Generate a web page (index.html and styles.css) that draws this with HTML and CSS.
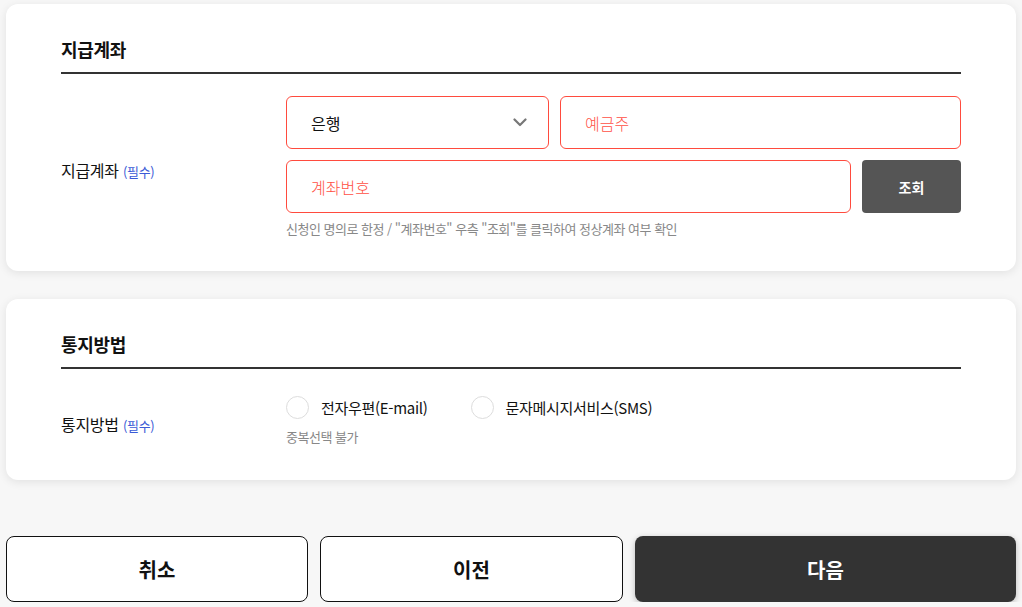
FILE: index.html
```html
<!DOCTYPE html>
<html lang="ko">
<head>
<meta charset="utf-8">
<title>지급계좌</title>
<link rel="stylesheet" href="styles.css">
</head>
<body>
<div class="page">
  <section class="card">
    <h2 class="card-title">지급계좌</h2>
    <div class="form-row">
      <div class="label">지급계좌 <span class="req">(필수)</span></div>
      <div class="fields">
        <div class="line">
          <div class="select">
            <span>은행</span>
            <svg class="chev" width="14" height="9" viewBox="0 0 14 9"><path d="M1.5 1.5 L7 7 L12.5 1.5" fill="none" stroke="#777" stroke-width="2.2" stroke-linecap="round" stroke-linejoin="round"/></svg>
          </div>
          <div class="input grow"><span class="ph">예금주</span></div>
        </div>
        <div class="line">
          <div class="input grow"><span class="ph">계좌번호</span></div>
          <button class="btn-check">조회</button>
        </div>
        <p class="help">신청인 명의로 한정 / "계좌번호" 우측 "조회"를 클릭하여 정상계좌 여부 확인</p>
      </div>
    </div>
  </section>

  <section class="card">
    <h2 class="card-title">통지방법</h2>
    <div class="form-row">
      <div class="label">통지방법 <span class="req">(필수)</span></div>
      <div class="fields">
        <div class="radios">
          <label class="radio"><span class="circle"></span>전자우편(E-mail)</label>
          <label class="radio"><span class="circle"></span>문자메시지서비스(SMS)</label>
        </div>
        <p class="help">중복선택 불가</p>
      </div>
    </div>
  </section>

  <div class="actions">
    <button class="btn-line">취소</button>
    <button class="btn-line">이전</button>
    <button class="btn-dark">다음</button>
  </div>
</div>
</body>
</html>
```

FILE: styles.css
```css
* { box-sizing: border-box; }
html, body {
  margin: 0;
  padding: 0;
  background: #f7f7f7;
  font-family: "Noto Sans CJK KR", "Noto Sans", sans-serif;
  color: #111;
}
.page {
  padding: 4px 6px 0 6px;
  display: flex;
  flex-direction: column;
}
.card {
  background: #fff;
  border-radius: 12px;
  box-shadow: 0 2px 10px rgba(0,0,0,0.09);
  padding: 32px 55px 33px 55px;
  margin-bottom: 28px;
}
.card + .card { padding-bottom: 34px; margin-bottom: 56px; }
.card-title {
  margin: 0;
  font-size: 18px;
  font-weight: 700;
  line-height: 26px;
  padding-bottom: 10px;
  border-bottom: 2px solid #333;
  letter-spacing: -0.3px;
}
.form-row {
  display: flex;
  align-items: center;
  padding-top: 22px;
}
.card + .card .form-row { padding-top: 27px; }
.label {
  width: 225px;
  flex: none;
  font-size: 16px;
  padding-top: 6px;
  letter-spacing: -0.3px;
}
.req {
  color: #3b5bd6;
  font-size: 13px;
}
.fields {
  flex: 1;
  display: flex;
  flex-direction: column;
  gap: 11px;
}
.line {
  display: flex;
  gap: 11px;
}
.select, .input {
  height: 53px;
  border: 1px solid #ff4b3e;
  border-radius: 6px;
  display: flex;
  align-items: center;
  padding: 0 24px;
  font-size: 16px;
}
.select {
  width: 263px;
  flex: none;
  justify-content: space-between;
  padding-right: 21px;
}
.grow { flex: 1; }
.ph { color: #ff5045; font-weight: 300; }
.btn-check {
  width: 99px;
  flex: none;
  height: 53px;
  border: 0;
  border-radius: 4px;
  background: #555;
  color: #fff;
  font-family: inherit;
  font-size: 14px;
  font-weight: 700;
}
.help {
  margin: -4px 0 0 0;
  font-size: 13px;
  line-height: 18px;
  color: #888;
  letter-spacing: -0.5px;
}
.radios {
  display: flex;
  gap: 43px;
}
.radio {
  display: flex;
  align-items: center;
  gap: 12px;
  font-size: 15px;
  letter-spacing: -0.3px;
}
.circle {
  width: 23px;
  height: 23px;
  border: 1px solid #ddd;
  border-radius: 50%;
  background: #fff;
}
.card + .card .help { margin-top: -2px; }
.actions {
  display: flex;
  gap: 12px;
}
.actions button {
  height: 66px;
  border-radius: 8px;
  font-family: inherit;
  font-size: 20px;
  font-weight: 700;
}
.btn-line {
  width: 302px;
  flex: none;
  background: #fff;
  border: 1px solid #111;
  color: #111;
}
.btn-line + .btn-line { width: 303px; }
.btn-dark {
  flex: 1;
  background: #333;
  border: 0;
  color: #fff;
  box-shadow: 0 2px 6px rgba(0,0,0,0.25);
}
```
